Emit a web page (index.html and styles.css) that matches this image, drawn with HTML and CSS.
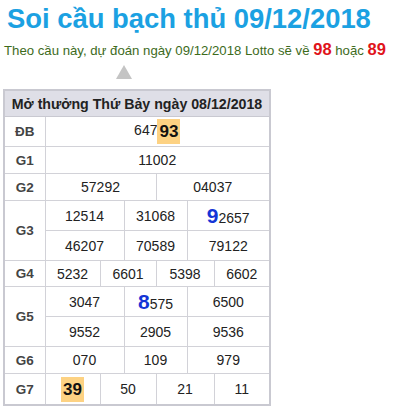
FILE: index.html
```html
<!DOCTYPE html>
<html>
<head>
<meta charset="utf-8">
<link rel="stylesheet" href="styles.css">
</head>
<body>
<div class="page">
  <h1 class="title">Soi cầu bạch thủ 09/12/2018</h1>
  <p class="sub">Theo cầu này, dự đoán ngày 09/12/2018 Lotto sẽ về <b class="red">98</b> hoặc <b class="red">89</b></p>
  <div class="arrow-row"><span class="arrow"></span></div>
  <table class="kq">
    <colgroup>
      <col class="c0"><col class="c1"><col class="c2"><col class="c3"><col class="c4"><col class="c5"><col class="c6">
    </colgroup>
    <thead>
      <tr class="h"><th colspan="7">Mở thưởng Thứ Bảy ngày 08/12/2018</th></tr>
    </thead>
    <tbody>
      <tr class="r30"><td class="lb">ĐB</td><td colspan="6">647<span class="hl">93</span></td></tr>
      <tr class="r27"><td class="lb">G1</td><td colspan="6">11002</td></tr>
      <tr class="r27"><td class="lb">G2</td><td colspan="3">57292</td><td colspan="3">04037</td></tr>
      <tr class="r30"><td class="lb" rowspan="2">G3</td><td colspan="2">12514</td><td colspan="2">31068</td><td colspan="2"><span class="big">9</span>2657</td></tr>
      <tr class="r30"><td colspan="2">46207</td><td colspan="2">70589</td><td colspan="2">79122</td></tr>
      <tr class="r26"><td class="lb">G4</td><td>5232</td><td colspan="2">6601</td><td colspan="2">5398</td><td>6602</td></tr>
      <tr class="r30"><td class="lb" rowspan="2">G5</td><td colspan="2">3047</td><td colspan="2"><span class="big">8</span>575</td><td colspan="2">6500</td></tr>
      <tr class="r30"><td colspan="2">9552</td><td colspan="2">2905</td><td colspan="2">9536</td></tr>
      <tr class="r27"><td class="lb">G6</td><td colspan="2">070</td><td colspan="2">109</td><td colspan="2">979</td></tr>
      <tr class="r31"><td class="lb">G7</td><td><span class="hl">39</span></td><td colspan="2">50</td><td colspan="2">21</td><td>11</td></tr>
    </tbody>
  </table>
</div>
</body>
</html>
```

FILE: styles.css
```css
html, body {
  margin: 0;
  padding: 0;
  background: #fff;
}
.page {
  padding: 0 0 0 3px;
  font-family: "Liberation Sans", Arial, sans-serif;
}
.title {
  margin: 0;
  padding: 2px 0 0 4px;
  height: 36px;
  line-height: 34px;
  font-size: 27.4px;
  font-weight: bold;
  color: #1ba1e2;
}
.sub {
  margin: 0;
  padding: 0 0 0 1px;
  height: 22px;
  line-height: 22px;
  font-size: 13.2px;
  color: #3d6b1c;
}
.red {
  color: #e0141b;
  font-size: 16.5px;
}
.arrow-row {
  height: 29px;
  padding-left: 113px;
  padding-top: 5px;
  box-sizing: border-box;
}
.arrow {
  display: block;
  width: 0;
  height: 0;
  border-left: 8px solid transparent;
  border-right: 8px solid transparent;
  border-bottom: 14px solid #c4c4c4;
}
.kq {
  border-collapse: collapse;
  table-layout: fixed;
  width: 267px;
  border: 2px solid #c9c9d1;
  color: #222;
  font-size: 14px;
}
.c0 { width: 41px; }
.c1 { width: 55px; }
.c2 { width: 24px; }
.c3 { width: 32px; }
.c4 { width: 31px; }
.c5 { width: 27px; }
.c6 { width: 56px; }
.kq th, .kq td {
  border: 1px solid #d2d2d8;
  padding: 0;
  text-align: center;
  vertical-align: middle;
}
.kq tr.h th {
  height: 25px;
  background: #dfdfe7;
  color: #222;
  font-size: 14.2px;
  font-weight: bold;
  border-bottom: 1px solid #c9c9d1;
}
.kq td.lb {
  font-weight: bold;
  color: #444;
  font-size: 13.5px;
}
.r30 td { height: 29px; }
.r27 td { height: 26px; }
.r26 td { height: 25px; }
.r31 td { height: 30px; }
.hl {
  display: inline-block;
  background: #fdd283;
  font-weight: bold;
  font-size: 17px;
  color: #111;
  padding: 3px 2px 2px;
  line-height: 20px;
  vertical-align: middle;
}
.big {
  color: #1535d6;
  font-weight: bold;
  font-size: 21px;
}
```
